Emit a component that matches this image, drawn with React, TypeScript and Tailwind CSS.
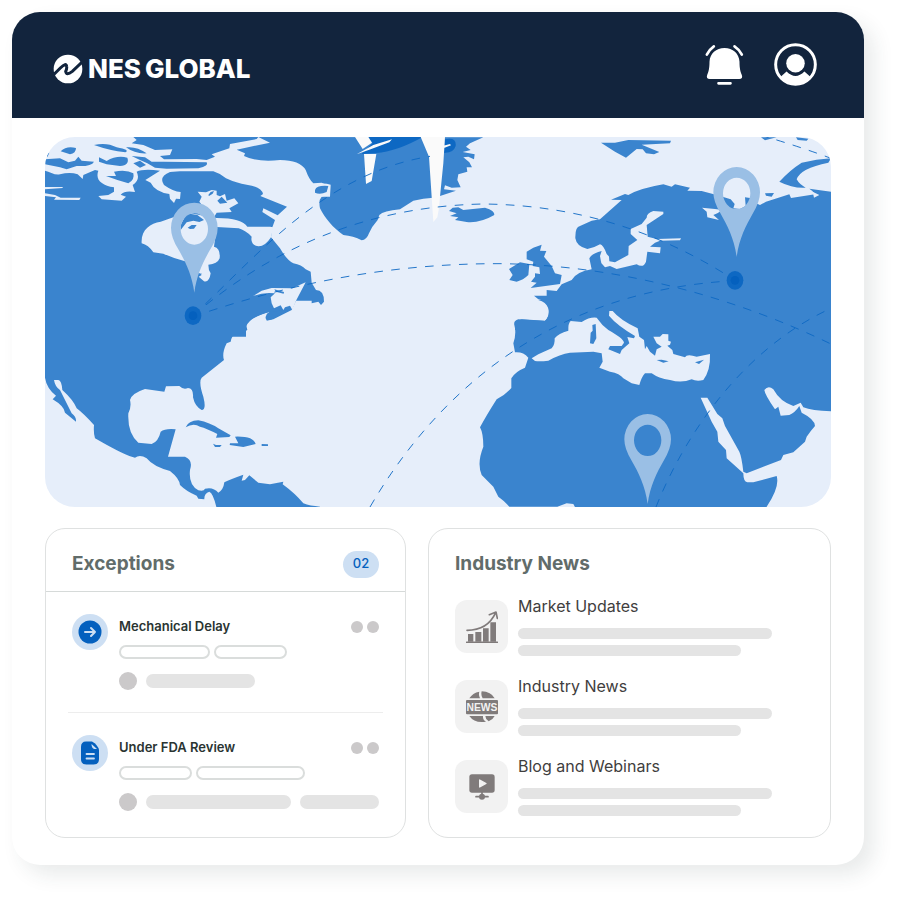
import React from "react";

const WATER = "#e6eefa";
const LAND = "#3a84ce";
const DEEP = "#0d68c3";
const SNOW = "#fafafa";

function Pin({ x, y }: { x: number; y: number }) {
  return (
    <path
      transform={`translate(${x} ${y})`}
      fill="#9abfe5"
      fillRule="evenodd"
      d="M0 270C-7 215-28 175-48 140Q-70 105-70 76A70 76 0 0 1 70 76Q70 105 48 140C28 175 7 215 0 270ZM0 32A41 47 0 0 0 0 126A41 47 0 0 0 0 32Z"
    />
  );
}

function Hub({ x, y }: { x: number; y: number }) {
  return (
    <g>
      <ellipse cx={x} cy={y} rx="25" ry="28" fill="#0d68c3" />
      <circle cx={x} cy={y} r="13" fill="#0460be" />
    </g>
  );
}

function WorldMap() {
  return (
    <svg viewBox="15 21 2358 1110" className="block h-auto w-full rounded-[30px]" role="img" aria-label="Shipment map">
      <rect x="15" y="21" width="2358" height="1110" fill={WATER} />

      {/* North America */}
      <g fill={LAND}>
        <path d="M15 122C30 125 45 137 60 133Q90 125 113 133L128 147L130 135L165 120L175 122C165 150 185 165 222 172L222 185L205 195L175 198L185 208L245 212L258 200L242 194Q255 180 285 186L278 165Q302 150 290 125Q310 115 360 122L316 150L332 158Q345 185 388 192L390 206L402 219L408 206L420 207L422 186Q400 185 372 165Q355 140 390 126L420 124H520Q540 130 558 145Q590 160 620 164Q665 170 669 192L661 198L741 230L713 256L670 235L667 246L705 270L697 292L693 322L720 355Q740 390 760 400Q785 405 797 418L812 425L815 458L828 480Q852 480 852 515L843 525L835 515L815 520V512H768L755 540L700 568L680 572L680 552L690 545Q630 560 618 590V620H15Z" />
        <path d="M280 21H655L650 27L570 42L568 55L515 73L525 80L500 90L470 87L372 88L360 78L390 75L397 58L345 60L310 45L275 40L290 30Z" />
        <path d="M275 78L315 82L335 95L370 95L500 97Q508 108 475 115L380 116L345 113L322 100L300 90Z" />
        <path d="M62 64Q80 46 108 54Q108 70 90 73ZM162 45Q200 36 230 52Q272 60 256 67Q210 62 162 45ZM258 52Q290 48 320 70Q285 72 258 52ZM15 88L60 85L85 97L105 92L115 80L125 92L162 95Q155 110 110 108L80 118L60 112L15 103ZM177 82L200 93Q230 75 262 83Q270 105 240 108L200 103L177 95ZM222 125Q260 118 280 130Q285 150 265 160Q230 150 198 138L228 138ZM280 100L300 92L318 105L300 113ZM19 70L28 68L22 82Z" />
      </g>
      <g fill={WATER}>
        <path d="M15 171H68V174L15 178ZM15 190L45 195L62 203H122L118 210L42 209L48 202L15 198ZM345 67H368V72H345Z" />
        <path d="M473 185L498 187L515 180L530 182L530 195L540 199L555 192L560 212L583 205L595 220L568 235L575 246L530 248L520 265L478 215L485 200Z" />
        <path d="M305 340C302 300 330 280 362 275L400 262L430 245L525 264Q605 263 622 290L690 290L700 292L693 322Q675 350 655 349Q630 345 635 320Q615 300 596 295L530 291L522 350Q542 355 539 385Q532 403 505 404Q505 420 512 430Q508 458 492 454L476 440L485 435L470 425L475 395L440 395Q400 385 370 371L340 367Q325 345 305 340Z" />
        <path d="M638 499L665 482L695 474L757 475L797 457L768 512L757 540L750 527L735 532L730 540L722 526L702 535L695 520L692 502L705 490Q670 485 638 499Z" />
      </g>
      <g fill={LAND}>
        <path d="M505 195L512 186L522 183L518 191L507 198ZM532 212L545 200L562 218L540 221Z" />
        <path d="M422 285L440 250L472 255L492 270L478 276L460 272L440 277L422 300ZM443 293L455 285H470L462 296L450 297ZM474 430L486 431L480 436Z" />
        <path d="M703 478L732 486L731 491L707 485Z" />
      </g>

      {/* Central America and the Caribbean */}
      <g fill={LAND} transform="translate(0 540)">
        <path d="M15 0H690V5Q670 20 680 30Q690 32 705 23L750 0L690 5Q625 25 618 42L622 60L605 70L585 73Q575 78 572 95L560 100Q545 130 552 150L485 203Q475 215 490 260Q500 300 485 300Q465 290 459 262Q461 235 444 234Q430 240 418 228L378 229L373 245L315 237Q275 250 270 270Q275 290 265 310Q262 370 295 398L335 402Q355 395 362 365Q375 355 407 358L384 440L435 440Q460 450 450 480Q445 525 475 541Q492 545 495 536Q520 530 535 548Q550 540 553 517Q570 508 610 494L605 512L615 510L628 496L655 518L690 523L730 515L728 523Q765 550 790 580Q810 588 840 590V595H530Q520 550 508 545Q492 550 493 568L475 566L470 557Q440 545 420 525Q418 505 390 483Q340 470 320 445Q300 432 285 443Q260 440 165 385Q160 370 162 345Q130 310 110 295Q100 270 67 240Q65 212 55 210L42 210Q45 230 60 240L95 310Q110 322 108 335L75 308Q72 288 38 268L48 257Q20 235 15 203Z" />
        <path d="M437 352Q445 332 475 331Q510 338 535 355L572 376L568 381L528 383L532 372Q500 355 480 350Q460 338 437 352ZM585 380Q640 378 647 402L610 411L569 405L570 400L595 400ZM519 401L528 405L545 405L540 411L525 411ZM665 402L684 403L684 408L665 408Z" />
      </g>

      {/* Greenland and Iceland */}
      <path fill={LAND} d="M655 21L690 38L590 59L615 70L612 78Q650 97 720 90Q780 90 797 120Q808 150 820 160L845 158L860 166L869 193L845 200Q835 210 840 235C855 265 880 295 910 315Q940 318 965 331Q980 330 987 310Q995 290 1013 270L1018 255Q1030 243 1080 238L1120 212Q1150 205 1180 203L1200 198L1248 182L1212 178L1215 166L1235 173L1262 172L1252 150L1255 133L1282 125L1280 112H1296L1288 97L1270 82L1285 80L1302 88L1304 73L1268 66L1292 60L1278 50L1290 40L1330 22Z" />
      <g transform="translate(780 0)">
        <path fill={WATER} d="M40 170Q60 155 92 164L90 200L60 200Q40 195 40 180Z" />
        <path fill={LAND} d="M45 180Q50 165 85 168L80 186Q60 195 45 188ZM447 243L458 233L475 232L490 240L555 233Q585 242 583 255Q540 280 500 276L465 270L475 262L450 258L470 250Z" />
        <path fill={DEEP} d="M205 21H368Q290 65 228 69L185 72L218 40ZM435 28Q470 20 467 48Q460 70 432 68Z" />
        <path fill={SNOW} d="M165 21H205L216 38L188 57ZM192 72H229L215 153L198 162ZM170 73L220 45L276 28L268 37L212 58ZM362 21H435L430 100L416 240L412 262L400 276L387 80ZM430 47L450 42L453 46L430 55Z" />
      </g>

      {/* Northern Europe */}
      <g transform="translate(1380 0)">
        <path fill={LAND} d="M45 600V575L65 568L135 572Q148 560 147 540Q140 510 115 508L102 497H140V480L170 483L185 463L215 450Q230 425 275 418L268 385Q275 370 305 363L300 378L312 385L303 398L315 412L330 408L350 417L410 403Q430 415 438 395L442 365L480 370L482 352L450 350L465 338L480 332L540 331L543 325L470 327L443 320L440 285L490 252V245L460 243Q440 250 440 263L425 282L392 297L392 312L412 330L386 348L385 375L345 397L328 394L327 380L320 372Q310 345 300 343Q280 355 262 357Q230 350 226 325Q225 290 240 288L275 272L300 268L365 210L333 209L375 192L385 195Q420 175 490 163L515 170L525 163L570 173L562 182L605 183L650 195L692 208L704 222L700 235L720 237L737 228L735 202L755 205L758 215L780 225L798 215L868 193L873 204L945 193L937 183L928 176L993 185V600Z" />
        <path fill={LAND} d="M80 365L100 353L125 344L120 362L139 363L132 380L155 408L165 430L185 435L180 462L92 474L110 458L93 455L105 440V430L120 432L118 412L98 408L100 395L80 388ZM27 417L60 397L88 402L85 435Q70 450 50 455L28 450L38 435Z" />
        <path fill={LAND} d="M303 38L345 38L385 30L513 32L510 40L425 44L478 66L462 73L438 70L428 58L410 57L378 83L345 65ZM993 85L985 98Q900 115 890 148Q898 163 917 173Q880 176 838 155Q870 120 905 98Q950 88 993 85ZM783 22H830L795 31ZM888 22L925 26L920 32L893 30ZM795 190L822 189L815 200L798 197Z" />
        <path fill={WATER} d="M606 233L645 237L668 240L652 250L640 255L657 270L622 262L620 245ZM938 185L958 195L942 203ZM300 378L325 377L326 388L312 400L303 395Z" />
      </g>

      {/* Africa, the Mediterranean and Arabia */}
      <g transform="translate(1290 510)">
        <path fill={LAND} d="M205 0H1083V334Q1025 332 1000 322L992 308L970 318Q930 305 910 268Q895 255 883 270Q885 285 915 328L925 320L932 347L958 345Q975 338 988 318L995 338Q1035 358 1035 378Q1020 395 1010 410L1005 425L970 457L940 465L933 480Q880 500 830 520L820 515Q815 470 808 455L765 378L757 355L742 342L712 293H692L725 365L742 395L745 425L768 450L770 475L820 520Q820 545 832 547L850 547L920 528Q930 560 890 620V625H317L310 612L290 610L262 620H118Q100 600 85 590L70 560L35 525Q20 490 40 440Q40 400 30 382Q50 345 80 298Q105 285 124 264V235Q135 215 165 203L175 173Q160 155 135 157L130 130Q140 100 133 75Q130 62 145 58L225 63Q240 50 235 25Q228 5 205 0Z" />
        <path fill={WATER} d="M185 175L205 163L245 145Q255 135 254 115Q265 100 295 92Q294 70 302 63L335 66Q360 50 380 53Q395 75 415 90Q460 115 462 128L455 138L420 138L415 148L450 162L455 150L478 130L472 111L492 115L495 108Q440 75 417 47L418 33L428 33Q450 60 503 85L508 110L522 120L525 148L530 138L540 155L555 167L560 148L575 140L560 130L550 110L570 110L578 102L595 103L595 122L603 125L600 134L592 137L607 150L610 162L645 172Q650 160 680 170L720 162Q722 210 700 240Q680 245 665 238Q635 250 600 240Q565 235 545 220L525 220Q515 230 508 255L485 250L460 235Q450 220 420 215L388 203L398 185L395 160L370 155L300 158Q270 162 235 182Q210 185 195 183Z" />
        <path fill={LAND} d="M367 75L377 72L379 115L370 132L360 130L362 98L368 92ZM560 180L575 179L596 184L580 188ZM675 187L702 179L687 192Z" />
      </g>

      <g fill="none" stroke="#0d68c3" strokeWidth="3" strokeOpacity="0.9" strokeDasharray="26 25">
        <path d="M459 557C650 380 850 130 1170 79" />
        <path d="M2160 15Q2280 50 2373 85" />
        <path d="M459 557C620 420 900 230 1330 222C1650 225 1900 330 2085 451" />
        <path d="M459 560C750 460 1050 400 1380 401C1750 405 2100 510 2373 642" />
        <path d="M990 1131C1200 770 1550 480 2085 452" />
        <path d="M1848 1131C1940 900 2120 650 2373 535" />
      </g>

      <Hub x={459} y={557} />
      <Hub x={2085} y={451} />
      <Pin x={463} y={218} />
      <Pin x={2090} y={111} />
      <Pin x={1823} y={852} />
    </svg>
  );
}

function LogoMark() {
  return (
    <svg viewBox="40 40 90 90" className="size-[30px]" aria-hidden="true">
      <circle cx="85" cy="85" r="43" fill="#fff" />
      <path
        d="M38 106L62 82Q80 64 81 78Q82 84 78 92Q80 106 98 92L132 60"
        fill="none"
        stroke="#12243d"
        strokeWidth="9"
      />
    </svg>
  );
}

function BellIcon() {
  return (
    <svg viewBox="45 39 116 126" className="h-[42px] w-[39px]" fill="none" stroke="#fff" strokeLinecap="round" aria-hidden="true">
      <path
        fill="#fff"
        stroke="none"
        d="M103 51C128 51 147 68 148 92C148 112 151 122 155 132Q159 144 147 144H59Q47 144 51 132C55 122 58 112 58 92C59 68 78 51 103 51Z"
      />
      <path strokeWidth="8" d="M50 71Q58 55 71 46M155 71Q147 55 133 46M85 157H121" />
    </svg>
  );
}

function UserIcon() {
  return (
    <svg viewBox="251 39 130 130" className="size-[43px]" aria-hidden="true">
      <circle cx="316" cy="104" r="60" fill="none" stroke="#fff" strokeWidth="9" />
      <circle cx="316" cy="100" r="28" fill="#fff" />
      <path fill="#fff" d="M272 140L289 125Q316 152 343 125L360 140Q342 165 316 166Q290 165 272 140Z" />
    </svg>
  );
}

function ArrowIcon() {
  return (
    <svg viewBox="0 0 24 24" className="size-6" fill="none" stroke="#cddff3" strokeWidth="2" strokeLinecap="round" strokeLinejoin="round" aria-hidden="true">
      <circle cx="12" cy="12" r="11.5" fill="#0460be" stroke="none" />
      <path d="M7 12H17M13 8L17 12L13 16" />
    </svg>
  );
}

function DocumentIcon() {
  return (
    <svg viewBox="0 0 24 24" className="size-6" aria-hidden="true">
      <path fill="#0460be" d="M8 .5H14Q20 4 21 9V18Q21 23.500 15.500 23.500H8.500Q3 23.500 3 18V6Q3 .5 8 .5Z" />
      <path fill="#cddff3" d="M13.500 3L19 8H16Q13.500 7 13.500 3Z" />
      <path stroke="#cddff3" strokeWidth="1.800" strokeLinecap="round" d="M8.500 13H16M8.500 17.500H16" />
    </svg>
  );
}

function GrowthIcon() {
  return (
    <svg viewBox="0 0 96 96" className="size-8" fill="#807b7b" aria-hidden="true">
      <path d="M6 69H22V92H6ZM28 63H46V92H28ZM51 52H68V92H51ZM73 34H90V92H73Z" />
      <path fill="none" stroke="#807b7b" strokeWidth="5" strokeLinecap="round" strokeLinejoin="round" d="M2 94H94M3 58Q65 58 89 5M70 11L90 3L94 22" />
    </svg>
  );
}

function NewsIcon() {
  return (
    <svg viewBox="0 0 96 96" className="size-8" fill="#807b7b" aria-hidden="true">
      <path d="M10 22Q20 5 40 2Q37 12 42 22ZM47 1Q75 2 86 22H50Q44 12 47 1ZM10 75H51Q50 87 60 92Q26 98 10 75ZM58 75H86Q80 87 68 91Q58 84 58 75Z" />
      <rect x="0" y="27" width="96" height="43" rx="3" />
      <text x="48" y="60" textAnchor="middle" fill="#f2f2f2" fontSize="31" className="font-['Liberation_Sans',sans-serif] font-bold">
        NEWS
      </text>
    </svg>
  );
}

function WebinarIcon() {
  return (
    <svg viewBox="0 0 96 96" className="size-8" fill="#807b7b" aria-hidden="true">
      <rect x="10" y="10" width="76" height="55" rx="8" />
      <path fill="#f2f2f2" stroke="#f2f2f2" strokeWidth="4" strokeLinejoin="round" d="M41 27L60 37.500L41 48Z" />
      <circle cx="48" cy="77" r="9" />
      <path stroke="#807b7b" strokeWidth="5" strokeLinecap="round" d="M48 64V78M30 77H66" />
    </svg>
  );
}

function Outline({ className }: { className: string }) {
  return <span className={`h-[14px] rounded-full border-2 border-[#dadddc] ${className}`} />;
}

function Bar({ className }: { className: string }) {
  return <span className={`block max-w-full rounded-full bg-[#e4e4e4] ${className}`} />;
}

function ExceptionItem({
  icon,
  title,
  tags,
  bars,
}: {
  icon: React.ReactNode;
  title: string;
  tags: string[];
  bars: string[];
}) {
  return (
    <li className="flex gap-[11px] px-1 py-[22px]">
      <span className="flex size-9 shrink-0 items-center justify-center rounded-full bg-[#cddff3]">{icon}</span>
      <div className="min-w-0 flex-1">
        <div className="flex h-6 items-center justify-between">
          <h3 className="text-[13px] leading-6 font-semibold text-[#2a3432]">{title}</h3>
          <button type="button" aria-label={`More about ${title}`} className="flex gap-1 pt-px">
            <span className="size-3 rounded-full bg-[#cbc9ca]" />
            <span className="size-3 rounded-full bg-[#cbc9ca]" />
          </button>
        </div>
        <div className="mt-[7px] flex gap-1">
          {tags.map((tag) => (
            <Outline key={tag} className={tag} />
          ))}
        </div>
        <div className="mt-[13px] flex items-center gap-[9px]">
          <span className="size-[18px] shrink-0 rounded-full bg-[#cbc9ca]" />
          {bars.map((bar) => (
            <Bar key={bar} className={`h-[14px] ${bar}`} />
          ))}
        </div>
      </div>
    </li>
  );
}

function NewsItem({ icon, title }: { icon: React.ReactNode; title: string }) {
  return (
    <li className="flex gap-[10px]">
      <span className="flex size-[53px] shrink-0 items-center justify-center rounded-xl bg-[#f2f2f2]">{icon}</span>
      <div className="-mt-1 min-w-0 flex-1">
        <h3 className="text-base leading-5 text-[#3f3e3e]">{title}</h3>
        <Bar className="mt-3 h-[11px] w-[254px]" />
        <Bar className="mt-[6px] h-[11px] w-[223px]" />
      </div>
    </li>
  );
}

export default function App() {
  return (
    <div className="min-h-screen bg-white pt-3 pr-[34px] pb-[33px] pl-3 font-[Inter,sans-serif]">
      <div className="overflow-hidden rounded-[28px] bg-white shadow-[10px_10px_20px_rgba(40,60,55,0.1)]">
        <header className="flex h-[106px] items-center justify-between bg-[#12243d] pr-[47px] pl-[41px]">
          <div className="flex items-center gap-[5px] pt-2 text-white">
            <LogoMark />
            <div className="flex gap-1 text-[26px] leading-8 font-extrabold">
              <span>NES</span>
              <span>GLOBAL</span>
            </div>
          </div>
          <div className="flex items-center gap-[30px] pb-px">
            <button type="button" aria-label="Notifications">
              <BellIcon />
            </button>
            <button type="button" aria-label="Account">
              <UserIcon />
            </button>
          </div>
        </header>

        <main className="px-[33px] pt-[19px] pb-[27px]">
          <WorldMap />

          <div className="mt-[21px] grid grid-cols-[361fr_403fr] gap-[22px]">
            <section className="rounded-[20px] border border-[#dfe1e1]">
              <div className="flex h-[63px] items-center justify-between border-b border-[#d6dad9] px-[26px] pt-2">
                <h2 className="text-[19px] leading-6 font-bold text-[#616c6a]">Exceptions</h2>
                <span className="flex h-[27px] w-9 items-center justify-center rounded-full bg-[#cddff3] text-[13px] font-medium text-[#0460be]">
                  02
                </span>
              </div>
              <ul className="divide-y divide-[#ededed] px-[22px]">
                <ExceptionItem icon={<ArrowIcon />} title="Mechanical Delay" tags={["w-[91px]", "w-[73px]"]} bars={["w-[109px]"]} />
                <ExceptionItem
                  icon={<DocumentIcon />}
                  title="Under FDA Review"
                  tags={["w-[73px]", "w-[109px]"]}
                  bars={["w-[145px]", "w-[79px]"]}
                />
              </ul>
            </section>

            <section className="rounded-[20px] border border-[#dfe1e1] px-[26px] pt-[23px] pb-[21px]">
              <h2 className="text-[19px] leading-6 font-bold text-[#616c6a]">Industry News</h2>
              <ul className="mt-6 flex flex-col gap-6">
                <NewsItem icon={<GrowthIcon />} title="Market Updates" />
                <NewsItem icon={<NewsIcon />} title="Industry News" />
                <NewsItem icon={<WebinarIcon />} title="Blog and Webinars" />
              </ul>
            </section>
          </div>
        </main>
      </div>
    </div>
  );
}
